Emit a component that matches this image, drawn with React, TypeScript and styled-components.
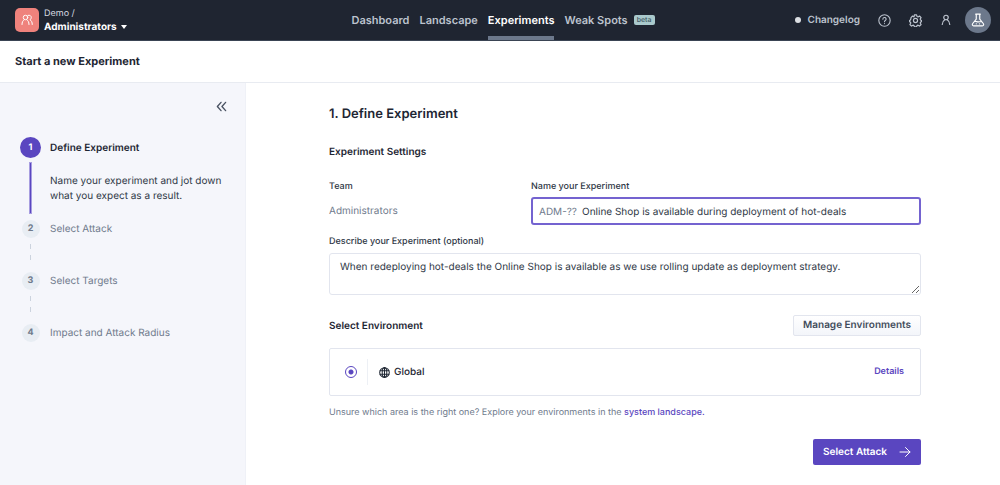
import React, { useState } from "react";
import styled, { createGlobalStyle } from "styled-components";

const GlobalStyle = createGlobalStyle`
  * { box-sizing: border-box; }
  body { margin: 0; background: #fff; color: #1e2633; font-family: Inter, sans-serif; font-size: 11px; line-height: 16px; text-rendering: geometricPrecision; }
  h1, h2, h3, p, ol { margin: 0; padding: 0; }
  button, input, textarea { font-family: inherit; text-rendering: inherit; }
  #root { display: flex; flex-direction: column; min-height: 100vh; }
`;

const TopBar = styled.header`
  display: grid;
  grid-template-columns: 1fr auto 1fr;
  height: 41px;
  padding: 0 9px 0 15px;
  background: #1f2531;
  border-bottom: 1px solid #3a4454;
`;

const TeamSwitch = styled.button`
  display: flex;
  align-items: center;
  justify-self: start;
  gap: 5px;
  padding: 0;
  border: 0;
  background: none;
  color: #fff;
  text-align: left;
`;

const TeamBadge = styled.span`
  display: grid;
  place-items: center;
  width: 24px;
  height: 24px;
  border-radius: 5px;
  background: #ef827c;
`;

const TeamText = styled.span`
  display: flex;
  flex-direction: column;
  padding-top: 1px;
  font-size: 9px;
  line-height: 12px;
  color: #d5d9e0;
`;

const TeamName = styled.strong`
  display: flex;
  align-items: center;
  gap: 4px;
  font-size: 10px;
  line-height: 14px;
  font-weight: 700;
  color: #fff;
`;

const Nav = styled.nav`
  display: flex;
  gap: 10px;
`;

const NavLink = styled.a<{ $active?: boolean }>`
  display: flex;
  align-items: center;
  gap: 6px;
  border-top: 3px solid transparent;
  border-bottom: 4px solid ${(p) => (p.$active ? "#6c788b" : "transparent")};
  color: ${(p) => (p.$active ? "#fff" : "#bcc3ce")};
  font-size: 11px;
  font-weight: 600;
  text-decoration: none;
`;

const Beta = styled.span`
  padding: 0 3px;
  border-radius: 2px;
  background: #a9c9cc;
  color: #3c5560;
  font-size: 7px;
  line-height: 10px;
  font-weight: 500;
`;

const Tools = styled.div`
  display: flex;
  align-items: center;
  justify-content: flex-end;
  gap: 18px;
`;

const Changelog = styled.a`
  display: flex;
  align-items: center;
  gap: 7px;
  color: #bcc3ce;
  font-size: 10px;
  font-weight: 600;
  text-decoration: none;
`;

const Dot = styled.span`
  width: 6px;
  height: 6px;
  border-radius: 50%;
  background: #dcdfe3;
`;

const IconButton = styled.button`
  display: grid;
  place-items: center;
  padding: 0;
  border: 0;
  background: none;
  color: #bcc3ce;
`;

const Avatar = styled(IconButton)`
  width: 26px;
  height: 26px;
  margin-left: -5px;
  border-radius: 50%;
  background: #6c788b;
  color: #fff;
`;

const TitleBar = styled.div`
  display: flex;
  align-items: center;
  height: 42px;
  padding: 0 15px 1px;
  border-bottom: 1px solid #e8ebf1;
`;

const PageTitle = styled.h1`
  font-size: 11px;
  font-weight: 700;
`;

const Body = styled.div`
  display: flex;
  flex: 1;
`;

const Sidebar = styled.aside`
  flex: 0 0 246px;
  padding: 16px 20px;
  background: #f5f6fb;
  border-right: 1px solid #eff1f7;
`;

const Collapse = styled(IconButton)`
  width: 11px;
  height: 14px;
  margin: 0 -2px 24px auto;
  color: #4a5363;
`;

const Steps = styled.ol`
  list-style: none;
`;

const Step = styled.li`
  display: grid;
  grid-template-columns: 21px 1fr;
  column-gap: 9px;
`;

const StepNumber = styled.span<{ $active?: boolean }>`
  display: grid;
  place-items: center;
  justify-self: center;
  width: ${(p) => (p.$active ? 21 : 18)}px;
  height: ${(p) => (p.$active ? 21 : 18)}px;
  border-radius: 50%;
  background: ${(p) => (p.$active ? "#5a46c0" : "#e8edf3")};
  color: ${(p) => (p.$active ? "#fff" : "#6f7a8b")};
  font-size: 9px;
  font-weight: 700;
`;

const StepLabel = styled.span<{ $active?: boolean }>`
  align-self: center;
  color: ${(p) => (p.$active ? "#1e2633" : "#707b8d")};
  font-size: 10px;
  font-weight: ${(p) => (p.$active ? 600 : 400)};
`;

const ActiveLine = styled.span`
  justify-self: center;
  width: 1px;
  height: 50px;
  margin: 5px 0 7px;
  background: #5a46c0;
  box-shadow: 0 0 0 1px #a79de0;
`;

const DashLine = styled.span`
  justify-self: center;
  width: 1px;
  height: 16px;
  margin: 6px 0 12px;
  background: repeating-linear-gradient(#ccd3de 0 5px, transparent 5px 11px);
`;

const StepText = styled.p`
  padding-top: 16px;
  font-size: 10px;
  line-height: 15px;
  color: #2f3846;
`;

const Main = styled.main`
  flex: 1;
  min-width: 0;
  padding: 21px 79px 20px 83px;
`;

const Heading = styled.h2`
  font-size: 13px;
  line-height: 20px;
  font-weight: 600;
`;

const SubHeading = styled.h3`
  font-size: 10px;
  line-height: 16px;
  font-weight: 600;
`;

const Form = styled.form`
  display: flex;
  flex-direction: column;
`;

const SettingsHeading = styled(SubHeading)`
  margin: 20px 0 19px;
`;

const FieldRow = styled.div`
  display: grid;
  grid-template-columns: 192px 1fr;
  column-gap: 10px;
`;

const Field = styled.div`
  display: flex;
  flex-direction: column;
`;

const labelText = `
  font-size: 9px;
  line-height: 16px;
  font-weight: 500;
  color: #2f3846;
`;

const Label = styled.label`${labelText}`;
const Caption = styled.span`${labelText}`;

const TeamValue = styled.span`
  margin-top: 8px;
  font-size: 10px;
  color: #707b8d;
`;

const NameBox = styled.div`
  display: flex;
  align-items: center;
  gap: 5px;
  height: 28px;
  margin-top: 2px;
  padding: 1px 6px 0;
  border: 2px solid #7463d0;
  border-radius: 3px;
  color: #707b8d;
  font-size: 10px;
`;

const NameInput = styled.input`
  flex: 1;
  min-width: 0;
  padding: 0;
  border: 0;
  outline: 0;
  color: #2f3846;
  font-size: 10px;
  line-height: 16px;
`;

const DescribeField = styled(Field)`
  margin-top: 9px;
`;

const TextArea = styled.textarea`
  height: 42px;
  margin-top: 3px;
  padding: 5px 10px 4px;
  border: 1px solid #e2e5ee;
  border-radius: 3px;
  outline: 0;
  color: #2f3846;
  font-size: 10px;
  line-height: 16px;
  resize: vertical;
`;

const EnvHeader = styled.div`
  display: flex;
  align-items: center;
  justify-content: space-between;
  margin: 20px 0 12px;
`;

const SecondaryButton = styled.button`
  height: 21px;
  padding: 0 9px 1px;
  border: 1px solid #e2e5ee;
  border-radius: 2px;
  background: linear-gradient(#fff, #f3f5fa);
  color: #424c5b;
  font-size: 10px;
  font-weight: 600;
`;

const EnvCard = styled.div`
  display: flex;
  align-items: center;
  height: 48px;
  padding: 0 16px 0 15px;
  border: 1px solid #e2e5ee;
  border-radius: 2px;
`;

const Radio = styled.input`
  appearance: none;
  width: 12px;
  height: 12px;
  margin: 0 10px 0 0;
  border: 1px solid #5a46c0;
  border-radius: 50%;
  background: radial-gradient(circle, #5a46c0 0 2px, #fff 3px);
`;

const EnvLabel = styled.label`
  display: flex;
  align-items: center;
  flex: 1;
  gap: 4px;
  height: 26px;
  padding-left: 11px;
  border-left: 1px solid #edf0f5;
  font-size: 10px;
  font-weight: 500;
`;

const TextLink = styled.a`
  color: #5a46c0;
  font-weight: 500;
  text-decoration: none;
`;

const DetailsLink = styled(TextLink)`
  font-size: 9px;
  font-weight: 600;
`;

const Hint = styled.p`
  margin-top: 9px;
  color: #707b8d;
  font-size: 9px;
`;

const PrimaryButton = styled.button`
  display: flex;
  align-items: center;
  align-self: flex-end;
  gap: 12px;
  height: 26px;
  margin-top: 18px;
  padding: 0 10px;
  border: 0;
  border-radius: 2px;
  background: #5a46c0;
  color: #fff;
  font-size: 10px;
  font-weight: 600;
`;

type IconProps = { size: number; box?: number; width?: number; children: React.ReactNode };

const Icon = ({ size, box = 24, width = 2, children }: IconProps) => (
  <svg width={size} height={size} viewBox={`0 0 ${box} ${box}`} fill="none" stroke="currentColor"
    strokeWidth={width} strokeLinecap="round" strokeLinejoin="round" aria-hidden="true">
    {children}
  </svg>
);

const laterSteps = ["Select Attack", "Select Targets", "Impact and Attack Radius"];

export default function App() {
  const [name, setName] = useState("Online Shop is available during deployment of hot-deals");
  const [text, setText] = useState(
    "When redeploying hot-deals the Online Shop is available as we use rolling update as deployment strategy."
  );

  return (
    <>
      <GlobalStyle />
      <TopBar>
        <TeamSwitch type="button">
          <TeamBadge>
            <Icon size={12} width={2}>
              <circle cx="9" cy="7" r="4.500" />
              <path d="M2 21c0-5 1.500-7.500 4.500-9.500M16 21c0-5-1.500-7.500-4.500-9.500M14 2.700c4-1 6.500 1 6.500 4.300 0 2-1 3.500-2.500 4.500 3 2 4.500 4.500 4.500 9.500" />
            </Icon>
          </TeamBadge>
          <TeamText>
            Demo /
            <TeamName>
              Administrators
              <svg width="6" height="4" viewBox="0 0 6 4" aria-hidden="true"><path d="M0 0h6L3 4z" fill="#fff" /></svg>
            </TeamName>
          </TeamText>
        </TeamSwitch>
        <Nav>
          <NavLink href="#dashboard">Dashboard</NavLink>
          <NavLink href="#landscape">Landscape</NavLink>
          <NavLink href="#experiments" $active aria-current="page">Experiments</NavLink>
          <NavLink href="#weak-spots">Weak Spots <Beta>beta</Beta></NavLink>
        </Nav>
        <Tools>
          <Changelog href="#changelog"><Dot />Changelog</Changelog>
          <IconButton type="button" aria-label="Help">
            <Icon size={13}>
              <circle cx="12" cy="12" r="10.500" />
              <path d="M9 9.500a3 3 0 1 1 4.500 2.500c-1 .6-1.500 1-1.500 2.200M12 17.500v.2" />
            </Icon>
          </IconButton>
          <IconButton type="button" aria-label="Settings">
            <Icon size={13} width={2.2}>
              <circle cx="12" cy="12" r="3.800" />
              <path d="M10 1.500h4l.7 3 2 .9 2.700-1.700 2.900 2.900-1.700 2.700.9 2 2 .7v2l-2 .7-.9 2 1.700 2.700-2.900 2.900-2.700-1.700-2 .9-.7 2h-4l-.7-2-2-.9-2.700 1.700-2.900-2.900 1.700-2.700-.9-2-2-.7v-2l2-.7.9-2L3.700 6.600l2.900-2.900 2.700 1.700z" />
            </Icon>
          </IconButton>
          <IconButton type="button" aria-label="Account">
            <Icon size={12} width={2.4}>
              <circle cx="12" cy="7" r="4.500" />
              <path d="M4.500 21c0-5 2-7.500 5-9.500M19.500 21c0-5-2-7.500-5-9.500" />
            </Icon>
          </IconButton>
          <Avatar type="button" aria-label="Tenant">
            <Icon size={14}>
              <path d="M8 2h8M9 2v8.500L3 18c-1.500 2-.5 4 1.500 4h15c2 0 3-2 1.500-4L15 10.500V2M6 14.500c3-1 5 1.500 8 .5l4-.5M9 18.500h.1M14.500 18.500h.1" />
            </Icon>
          </Avatar>
        </Tools>
      </TopBar>
      <TitleBar><PageTitle>Start a new Experiment</PageTitle></TitleBar>
      <Body>
        <Sidebar>
          <Collapse type="button" aria-label="Collapse sidebar">
            <Icon size={11} width={3}><path d="M11 3l-8 9 8 9M21 3l-8 9 8 9" /></Icon>
          </Collapse>
          <Steps>
            <Step>
              <StepNumber $active>1</StepNumber>
              <StepLabel $active>Define Experiment</StepLabel>
              <ActiveLine />
              <StepText>Name your experiment and jot down what you expect as a result.</StepText>
            </Step>
            {laterSteps.map((label, i) => (
              <Step key={label}>
                <StepNumber>{i + 2}</StepNumber>
                <StepLabel>{label}</StepLabel>
                {i < laterSteps.length - 1 && <DashLine />}
              </Step>
            ))}
          </Steps>
        </Sidebar>
        <Main>
          <Form onSubmit={(e) => e.preventDefault()}>
            <Heading>1. Define Experiment</Heading>
            <SettingsHeading>Experiment Settings</SettingsHeading>
            <FieldRow>
              <Field>
                <Caption>Team</Caption>
                <TeamValue>Administrators</TeamValue>
              </Field>
              <Field>
                <Label htmlFor="name">Name your Experiment</Label>
                <NameBox>
                  ADM-??
                  <NameInput id="name" value={name} onChange={(e) => setName(e.target.value)} />
                </NameBox>
              </Field>
            </FieldRow>
            <DescribeField>
              <Label htmlFor="description">Describe your Experiment (optional)</Label>
              <TextArea id="description" value={text} onChange={(e) => setText(e.target.value)} />
            </DescribeField>
            <EnvHeader>
              <SubHeading>Select Environment</SubHeading>
              <SecondaryButton type="button">Manage Environments</SecondaryButton>
            </EnvHeader>
            <EnvCard>
              <Radio type="radio" id="global" name="environment" defaultChecked />
              <EnvLabel htmlFor="global">
                <Icon size={11} width={2.2}>
                  <circle cx="12" cy="12" r="10.500" />
                  <ellipse cx="12" cy="12" rx="5" ry="10.500" />
                  <path d="M12 1.500v21M2.500 8h19M2.500 16h19" />
                </Icon>
                Global
              </EnvLabel>
              <DetailsLink href="#details">Details</DetailsLink>
            </EnvCard>
            <Hint>
              Unsure which area is the right one? Explore your environments in the{" "}
              <TextLink href="#landscape">system landscape.</TextLink>
            </Hint>
            <PrimaryButton type="submit">
              Select Attack
              <Icon size={12}><path d="M2 12h20M13 3l9 9-9 9" /></Icon>
            </PrimaryButton>
          </Form>
        </Main>
      </Body>
    </>
  );
}
